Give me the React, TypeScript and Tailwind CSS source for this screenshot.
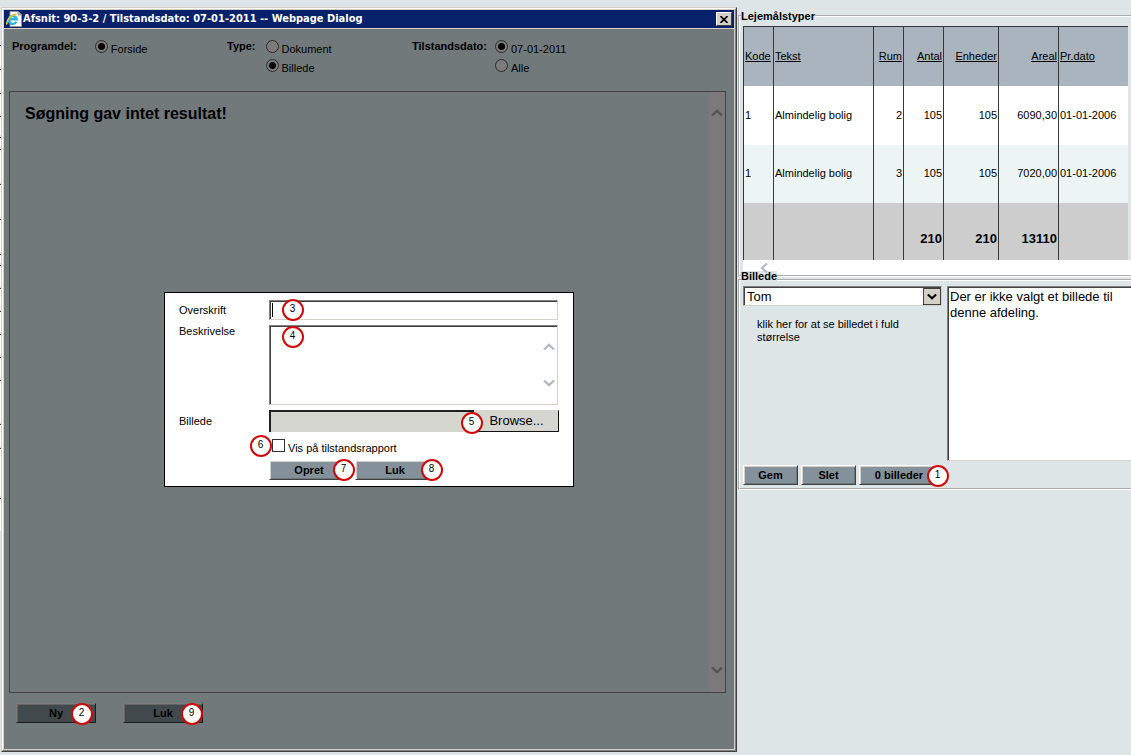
import type { ReactNode } from 'react';

interface UnitRow {
  kode: string;
  tekst: string;
  rum: string;
  antal: string;
  enheder: string;
  areal: string;
  dato: string;
}

const units: UnitRow[] = [
  { kode: '1', tekst: 'Almindelig bolig', rum: '2', antal: '105', enheder: '105', areal: '6090,30', dato: '01-01-2006' },
  { kode: '1', tekst: 'Almindelig bolig', rum: '3', antal: '105', enheder: '105', areal: '7020,00', dato: '01-01-2006' },
];

const columns = [
  { label: 'Kode', width: 'w-[30px]', align: 'text-left' },
  { label: 'Tekst', width: 'w-[100px]', align: 'text-left' },
  { label: 'Rum', width: 'w-[30px]', align: 'text-right' },
  { label: 'Antal', width: 'w-[40px]', align: 'text-right' },
  { label: 'Enheder', width: 'w-[55px]', align: 'text-right' },
  { label: 'Areal', width: 'w-[60px]', align: 'text-right' },
  { label: 'Pr.dato', width: 'w-[70px]', align: 'text-left' },
];

// Edges of the form fields on the page behind the dialog
const fieldEdges = [
  'h-[22px]', 'h-[22px]', 'h-[21px]', 'h-[19px]', 'h-[10px]', 'h-[33px]', 'h-[33px]', 'h-[33px]',
  'h-[9px]', 'h-[21px]', 'h-[21px]', 'h-[21px]', 'h-[21px]', 'h-[21px]', 'h-[42px]', 'h-[22px]',
  'h-[48px]', 'h-[33px]',
];

function Badge({ n, className }: { n: number; className: string }) {
  return (
    <span
      className={`pointer-events-none absolute flex size-[22px] items-center justify-center rounded-full border-2 border-[#cf0a0a] bg-white pr-px pb-[2px] text-[10px] leading-none font-normal text-black ${className}`}
    >
      {n}
    </span>
  );
}

function Chevron({ className, d }: { className: string; d: string }) {
  return (
    <svg viewBox="0 0 12 8" className={className} fill="none" stroke="currentColor" strokeWidth="2.4" aria-hidden="true">
      <path d={d} />
    </svg>
  );
}

const UP = 'M1 6.5 6 1.8 11 6.5';
const DOWN = 'M1 1.5 6 6.2 11 1.5';

function Radio({ name, label, checked }: { name: string; label: string; checked?: boolean }) {
  return (
    <label className="flex h-[19px] items-start gap-[3px] pt-[3px]">
      <input
        type="radio"
        name={name}
        defaultChecked={checked}
        className="size-[13px] appearance-none rounded-full border border-[#2c2c2c] bg-[#7d7b7a] checked:bg-[radial-gradient(circle,#000_0_3px,transparent_4px)]"
      />
      <span className="pt-px leading-4">{label}</span>
    </label>
  );
}

function RadioGroup({ title, gap, children }: { title: string; gap: string; children: ReactNode }) {
  return (
    <div role="radiogroup" aria-label={title} className={`flex items-start ${gap}`}>
      <span className="pt-px leading-4 font-bold">{title}</span>
      <div>{children}</div>
    </div>
  );
}

function PanelButton({ width, children }: { width: string; children: ReactNode }) {
  return (
    <button
      type="button"
      className={`relative h-5 border border-t-white border-r-[#404040] border-b-[#404040] border-l-white bg-[#84919a] text-[11px] font-bold shadow-[inset_1px_1px_#d4d0c8,inset_-1px_-1px_#6b767d] ${width}`}
    >
      {children}
    </button>
  );
}

function DimButton({ children }: { children: ReactNode }) {
  return (
    <button
      type="button"
      className="relative h-5 w-20 border border-t-[#7d7b7a] border-r-[#1c1c1c] border-b-[#1c1c1c] border-l-[#7d7b7a] bg-[#42494d] text-[11px] font-bold shadow-[inset_1px_1px_#666462]"
    >
      {children}
    </button>
  );
}

function PageIcon() {
  return (
    <svg viewBox="0 0 16 16" className="size-4 shrink-0" aria-hidden="true">
      <path d="M4 .5h8l3.5 3.5v11.5H4z" fill="#fff" stroke="#9a9a94" />
      <path d="M12 .5V4h3.5z" fill="#d4d0c8" stroke="#9a9a94" />
      <path d="M10.3 10.800A4 4 0 1 1 10.700 8.300H3.500" fill="none" stroke="#27b5d8" strokeWidth="2.4" />
      <path d="M1.200 13.500C-.5 11 4 4 10.500 3" fill="none" stroke="#e3c231" strokeWidth="1.6" />
    </svg>
  );
}

function CreateForm() {
  const sunken = 'border border-t-[#808080] border-r-[#d4d0c8] border-b-[#d4d0c8] border-l-[#808080] shadow-[inset_1px_1px_#404040]';
  return (
    <form className="absolute inset-x-0 top-[283px] mx-auto w-[410px] border border-black bg-white px-[14px] pt-[7px] pb-[6px]">
      <div className="grid grid-cols-[90px_1fr] leading-4">
        <label htmlFor="overskrift" className="pt-[2px]">Overskrift</label>
        <div className="relative mr-px mb-[5px] flex">
          <input id="overskrift" className={`h-5 w-full bg-white px-1 text-[13px] ${sunken}`} />
          <span className="absolute top-[3px] left-[3px] h-[14px] w-px bg-black" />
          <Badge n={3} className="-top-px left-[13px]" />
        </div>

        <label htmlFor="beskrivelse" className="-mt-[2px]">Beskrivelse</label>
        <div className="relative mr-px mb-[5px] flex">
          <textarea id="beskrivelse" className={`h-20 w-full resize-none bg-white px-1 text-[13px] ${sunken}`} />
          <div className="pointer-events-none absolute inset-y-[18px] right-[3px] flex flex-col justify-between text-[#b5b9be]">
            <Chevron className="h-2 w-3" d={UP} />
            <Chevron className="h-2 w-3" d={DOWN} />
          </div>
          <Badge n={4} className="top-px left-[13px]" />
        </div>

        <label htmlFor="billede" className="pt-[3px]">Billede</label>
        <div className="relative flex h-[22px]">
          <input
            id="billede"
            readOnly
            className="min-w-0 flex-1 border-t-2 border-l-2 border-t-[#202020] border-l-[#202020] bg-[#d6d6d0]"
          />
          <button
            type="button"
            className="relative w-[85px] border border-t-[#d6d6d0] border-r-[#101010] border-b-[#101010] border-l-[#d6d6d0] bg-[#d6d6d0] text-[13px] leading-4"
          >
            Browse...
            <Badge n={5} className="top-px -left-[14px]" />
          </button>
        </div>
      </div>

      <div className="relative mt-[7px] ml-[93px] flex h-[21px] items-start gap-[3px]">
        <input id="vis" type="checkbox" className="size-[13px] appearance-none border border-[#303030] bg-white checked:bg-[#303030]" />
        <label htmlFor="vis" className="pt-px leading-4">Vis på tilstandsrapport</label>
        <Badge n={6} className="-top-[4px] -left-[22px]" />
      </div>

      <div className="ml-[90px] flex gap-[6px]">
        <PanelButton width="w-20">
          Opret
          <Badge n={7} className="-top-[2px] left-[63px]" />
        </PanelButton>
        <PanelButton width="w-20">
          Luk
          <Badge n={8} className="-top-[2px] left-[65px]" />
        </PanelButton>
      </div>
    </form>
  );
}

function DialogWindow() {
  return (
    <section
      role="dialog"
      aria-label="Webpage Dialog"
      className="flex min-w-0 flex-1 border border-t-[#d4d0c8] border-r-[#404040] border-b-[#404040] border-l-[#d4d0c8]"
    >
      <div className="relative flex min-w-0 flex-1 flex-col border border-t-white border-r-[#808080] border-b-[#808080] border-l-white bg-[#d4d0c8] p-px">
        <header className="mb-px flex h-[18px] items-center bg-[#08216b] pr-[2px] pl-[2px]">
          <PageIcon />
          <h1 className="flex-1 truncate pl-px font-['DejaVu_Sans_Condensed','DejaVu_Sans',sans-serif] text-[11px] font-bold text-white">
            Afsnit: 90-3-2 / Tilstandsdato: 07-01-2011 -- Webpage Dialog
          </h1>
          <button
            type="button"
            aria-label="Luk vindue"
            className="flex h-[14px] w-4 items-center justify-center border border-t-white border-r-[#404040] border-b-[#404040] border-l-white bg-[#d4d0c8]"
          >
            <svg viewBox="0 0 8 7" className="h-[7px] w-2" stroke="#000" strokeWidth="1.6" aria-hidden="true">
              <path d="M.5 0 7.5 7M7.5 0 .5 7" />
            </svg>
          </button>
        </header>

        <div className="flex flex-1 flex-col bg-[#71797b] px-[5px] pt-2 pb-[26px]">
          <div className="flex h-[54px] items-start pl-[3px]">
            <div className="w-[215px]">
              <RadioGroup title="Programdel:" gap="gap-[18px]">
                <Radio name="programdel" label="Forside" checked />
              </RadioGroup>
            </div>
            <div className="w-[185px]">
              <RadioGroup title="Type:" gap="gap-[10px]">
                <Radio name="type" label="Dokument" />
                <Radio name="type" label="Billede" checked />
              </RadioGroup>
            </div>
            <RadioGroup title="Tilstandsdato:" gap="gap-[8px]">
              <Radio name="dato" label="07-01-2011" checked />
              <Radio name="dato" label="Alle" />
            </RadioGroup>
          </div>

          <div className="mr-[3px] flex flex-1 border border-[#434344]">
            <h2 className="flex-1 pt-[12px] pl-[15px] text-[16px] leading-5 font-bold">Søgning gav intet resultat!</h2>
            <div className="flex w-4 flex-col items-center justify-between bg-[#7b7979] pt-[17px] pb-[18px] text-[#555]">
              <Chevron className="h-2 w-3" d={UP} />
              <Chevron className="h-2 w-3" d={DOWN} />
            </div>
          </div>

          <div className="mt-[10px] flex gap-[27px] pl-[7px]">
            <DimButton>
              Ny
              <Badge n={2} className="-top-px left-[54px]" />
            </DimButton>
            <DimButton>
              Luk
              <Badge n={9} className="-top-px left-[57px]" />
            </DimButton>
          </div>
        </div>

        <CreateForm />
      </div>
    </section>
  );
}

function UnitTable() {
  const cell = 'border-l border-[#383838] px-px';
  return (
    <table className="w-[385px] table-fixed border-separate border-spacing-0 leading-4">
      <thead>
        <tr className="h-[60px] bg-[#aab4be]">
          {columns.map(({ label, width, align }) => (
            <th key={label} className={`border-t pb-[2px] font-normal ${cell} ${width} ${align}`}>
              <a href="#" className="underline">{label}</a>
            </th>
          ))}
        </tr>
      </thead>
      <tbody>
        {units.map((unit, index) => (
          <tr key={index} className="odd:h-[59px] odd:bg-white even:h-[58px] even:bg-[#edf5f4]">
            {Object.values(unit).map((value, i) => (
              <td key={columns[i].label} className={`pb-[2px] ${cell} ${columns[i].align}`}>{value}</td>
            ))}
          </tr>
        ))}
      </tbody>
      <tfoot>
        <tr className="h-[57px] bg-[#cdcdcd] text-[13px] font-bold">
          {['', '', '', '210', '210', '13110', ''].map((total, i) => (
            <td key={columns[i].label} className={`pt-[14px] ${cell} ${columns[i].align}`}>{total}</td>
          ))}
        </tr>
      </tfoot>
    </table>
  );
}

function SidePanels() {
  return (
    <aside className="ml-px w-[393px] shrink-0 pt-[2px]">
      <fieldset className="min-w-0 border-2 border-r-0 border-white pl-[3px] [border-style:groove]">
        <legend className="-ml-[2px] text-[11px] leading-[14px] font-bold">Lejemålstyper</legend>
        <div className="pt-[3px]">
          <UnitTable />
          <div className="h-[15px] bg-white pt-[3px] pl-[17px]">
            <svg viewBox="0 0 8 10" className="h-[10px] w-2" fill="none" stroke="#b5b9be" strokeWidth="2.2" aria-hidden="true">
              <path d="M7 .5 2 5l5 4.5" />
            </svg>
          </div>
        </div>
      </fieldset>

      <fieldset className="-mt-[6px] min-w-0 border-2 border-r-0 border-white pl-[3px] [border-style:groove]">
        <legend className="-ml-[2px] bg-[#dde5e7] pb-2 text-[11px] leading-[10px] font-bold">Billede</legend>
        <div className="-mt-[3px] flex gap-[5px]">
          <div className="w-[199px]">
            <div className="relative">
              <select
                aria-label="Billede"
                className="block h-5 w-full appearance-none border border-t-[#808080] border-r-[#d4d0c8] border-b-[#d4d0c8] border-l-[#808080] bg-white pt-px pl-[3px] text-[13px] leading-4 shadow-[inset_1px_1px_#404040]"
              >
                <option>Tom</option>
              </select>
              <span className="pointer-events-none absolute top-[2px] right-px flex h-[17px] w-[18px] items-center justify-center border border-[#404040] bg-[#d4d0c8]">
                <Chevron className="h-[7px] w-[10px] text-black" d={DOWN} />
              </span>
            </div>
            <p className="pt-3 pr-8 pl-[14px] text-[11px] leading-[13px]">klik her for at se billedet i fuld størrelse</p>
          </div>
          <textarea
            aria-label="Billedtekst"
            className="block h-[175px] min-w-0 flex-1 resize-none border border-t-[#808080] border-r-0 border-b-[#d4d0c8] border-l-[#808080] bg-white px-[2px] py-[2px] text-[13px] leading-4 shadow-[inset_1px_1px_#404040]"
            defaultValue="Der er ikke valgt et billede til denne afdeling."
          />
        </div>
        <div className="flex gap-[3px] pt-1 pb-[3px]">
          <PanelButton width="w-[55px]">Gem</PanelButton>
          <PanelButton width="w-[55px]">Slet</PanelButton>
          <PanelButton width="w-20">
            0 billeder
            <Badge n={1} className="-top-px left-[67px]" />
          </PanelButton>
        </div>
      </fieldset>
    </aside>
  );
}

export default function App() {
  return (
    <main className="flex min-h-screen overflow-hidden bg-[#dde5e7] pt-[7px] pb-[3px] font-['Liberation_Sans',Arial,sans-serif] text-[11px] text-black">
      <div className="-mr-px w-px pt-[38px]" aria-hidden="true">
        {fieldEdges.map((height, i) => (
          <div key={i} className={`mb-[2px] border-t border-[#404040] bg-white ${height}`} />
        ))}
      </div>
      <div className="flex min-w-0 flex-1 pl-px">
        <DialogWindow />
      </div>
      <SidePanels />
    </main>
  );
}
